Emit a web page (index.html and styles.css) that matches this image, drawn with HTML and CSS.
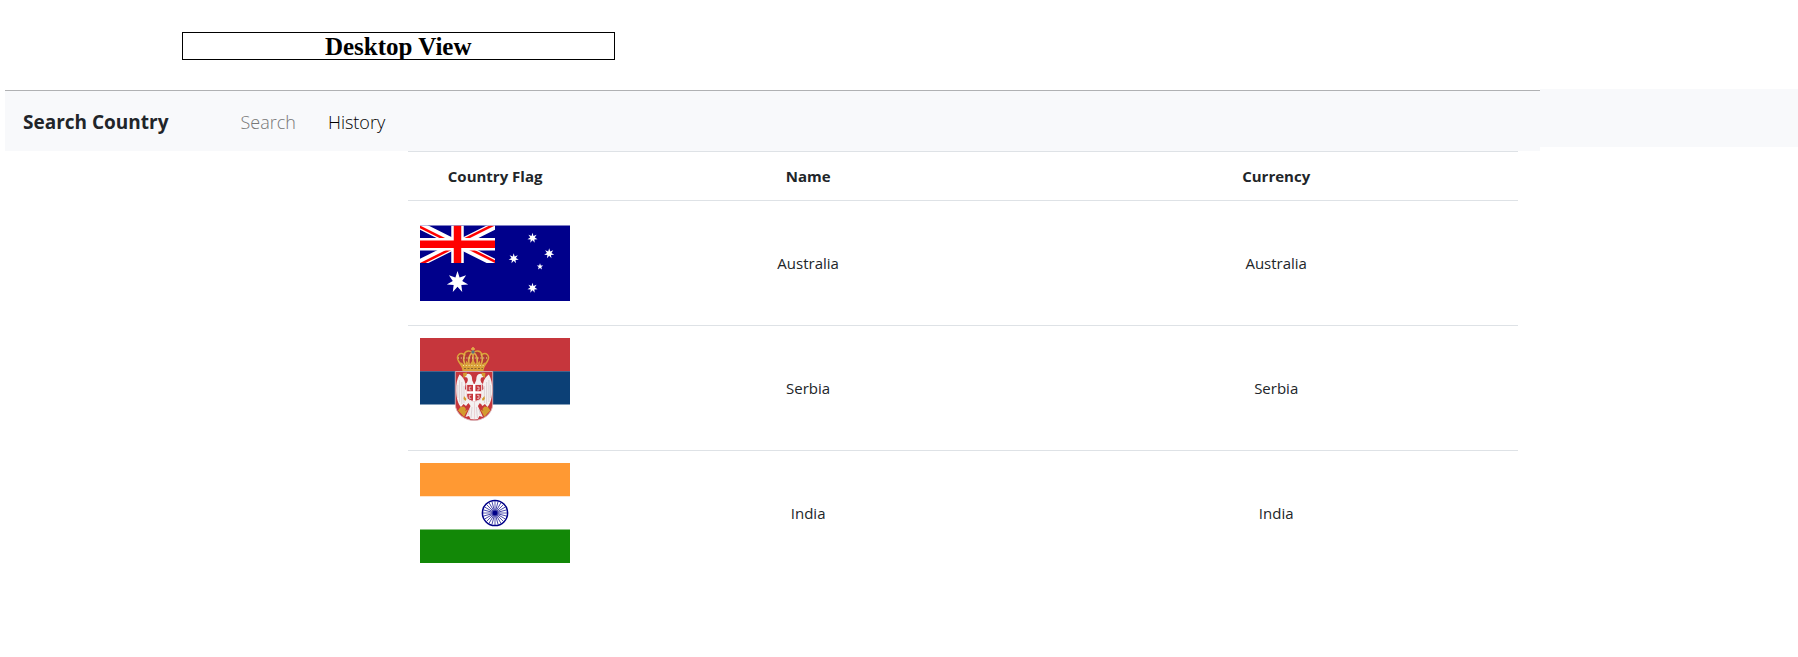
FILE: index.html
```html
<!DOCTYPE html>
<html lang="en">
<head>
<meta charset="utf-8">
<title>Search Country</title>
<link rel="stylesheet" href="styles.css">
</head>
<body>
<h1 class="view-title">Desktop View</h1>
<header class="header">
  <nav class="navbar">
    <span class="brand">Search Country</span>
    <a class="nav-link muted" href="#search">Search</a>
    <a class="nav-link" href="#history">History</a>
  </nav>
  <div class="header-rest"></div>
</header>
<main class="content">
  <table class="countries">
    <thead>
      <tr><th class="flag-col" scope="col">Country Flag</th><th class="name-col" scope="col">Name</th><th scope="col">Currency</th></tr>
    </thead>
    <tbody>
      <tr>
        <td>
          <svg class="flag" viewBox="0 0 150 100" role="img" aria-label="Flag of Australia">
            <defs>
              <path id="star7" d="M0-100 19-40 78-62 43-10 97 22 35 28 43 90 0 44-43 90-35 28-97 22-43-10-78-62-19-40Z"/>
              <clipPath id="canton"><path d="M0 0H60V30H0Z"/></clipPath>
              <clipPath id="saltire"><path d="M30 15H60V30ZM30 15V30H0ZM30 15H0V0ZM30 15V0H60Z"/></clipPath>
            </defs>
            <g transform="translate(0 12.5)">
              <path fill="#00008b" d="M0 0H150V75.500H0Z"/>
              <g transform="scale(1.25)" clip-path="url(#canton)">
                <path d="M0 0 60 30M60 0 0 30" stroke="#fff" stroke-width="6"/>
                <path d="M0 0 60 30M60 0 0 30" stroke="#f00" stroke-width="4" clip-path="url(#saltire)"/>
                <path d="M30 0V30M0 15H60" stroke="#fff" stroke-width="10"/>
                <path d="M30 0V30M0 15H60" stroke="#f00" stroke-width="6"/>
              </g>
              <g fill="#fff">
                <use href="#star7" transform="translate(37.5 56.5) scale(.11)"/>
                <use href="#star7" transform="translate(112.5 12.5) scale(.052)"/>
                <use href="#star7" transform="translate(93.7 33) scale(.052)"/>
                <use href="#star7" transform="translate(129.2 28) scale(.052)"/>
                <use href="#star7" transform="translate(112.5 62.5) scale(.052)"/>
                <path d="M120 37.7l.8 2.3h2.4l-1.9 1.5.7 2.4-2-1.4-2 1.4.7-2.4-1.9-1.5h2.4z"/>
              </g>
            </g>
          </svg>
        </td>
        <td>Australia</td><td>Australia</td>
      </tr>
      <tr>
        <td>
          <svg class="flag" viewBox="0 0 150 100" role="img" aria-label="Flag of Serbia">
            <path fill="#c6363c" d="M0 0H150V33.3H0Z"/>
            <path fill="#0c4076" d="M0 33.3H150V66.6H0Z"/>
            <!-- shield -->
            <path fill="#c6363c" stroke="#d9b3b8" stroke-width=".9" d="M35.300 33.500H72.700V66C72.700 76 63 82.500 54 82.500S35.300 76 35.300 66Z"/>
            <!-- eagle -->
            <g id="half-eagle">
              <path fill="#f4f1f1" d="M54.200 47 53 44C51.500 42 52.500 40 51.500 38 49.500 34.500 45.500 35.500 44.500 39L47 39.500C49 42 47 45 45.500 46 44.500 41 42 38 39.500 36.500 37 41 36 46 36.200 53 36.400 60 38 66 41 69L43.500 66 46 68 48.500 65 50.500 68C49 72 47 75 45.500 79L49 78 50.500 81 54.200 81.500Z"/>
              <path stroke="#c9b3b8" stroke-width=".5" fill="none" d="M39.500 42V64M41.800 44V66M44 48V65M49.500 71 48 77M52 69 51 80M37.800 47V60"/>
              <path fill="#d39b2f" d="M43 35 47 34.500 46.500 37.500 43.500 40ZM40.500 69 44 68.500 46 71 45 73 48 71.500 46 75 44 79 41.500 76 38 72.500ZM44 58 46.500 61 45.500 63 43.500 61Z"/>
              <path fill="#c6363c" d="M45.500 46 47 48V53L45 51ZM47 66 49.500 69 47.500 70Z"/>
            </g>
            <use href="#half-eagle" transform="translate(108.400 0) scale(-1 1)"/>
            <path fill="#c6363c" stroke="#f3e7e7" stroke-width="1" d="M46.700 46.500H61.700V58C61.700 65 46.700 65 46.700 58Z"/>
            <path stroke="#fff" stroke-width="2.400" d="M54.200 46V63M47 54.500H61.500"/>
            <path stroke="#f3dede" stroke-width=".8" fill="none" d="M51.300 49H49.300V52H51.300M57 49H59V52H57M51.300 57.300H49.300V60.300H51.300M57 57.300H59V60.300H57"/>
            <!-- crown -->
            <path fill="#b23a35" stroke="#dba33b" stroke-width="1.500" d="M43 30 38.500 23C35.500 17.500 40 14 44 16.500 46 12 51 12 53 15.500 55 12 60 12 62 16.500 66 14 70.500 17.500 67.500 23L63 30Z"/>
            <path fill="none" stroke="#e2b04a" stroke-width="1.600" d="M53 9V28M51 11H55M46 29C43 23 43 19 45 16M60 29C63 23 63 19 61 16M49.500 28C48 22 49 17 52 15M56.500 28C58 22 57 17 54 15"/>
            <path fill="#d9a23a" d="M40.500 24 45 27 46.500 22.500 49.500 27 53 21.500 56.500 27 59.500 22.500 61 27 65.500 24 63.500 33H42.500Z"/>
            <path stroke="#87612c" stroke-width="1.200" stroke-dasharray="2 1.500" d="M44 30.500H63"/>
            <path stroke="#f2dfa5" stroke-width="1" stroke-dasharray="1 1.800" d="M38 20H68M43 27.500H64"/>
            <circle cx="53" cy="14" r="1.700" fill="#5e7180"/>
          </svg>
        </td>
        <td>Serbia</td><td>Serbia</td>
      </tr>
      <tr>
        <td>
          <svg class="flag" viewBox="0 0 150 100" role="img" aria-label="Flag of India">
            <path fill="#f93" d="M0 0H150V33.300H0Z"/>
            <path fill="#128807" d="M0 66.600H150V100H0Z"/>
            <g transform="translate(75 50)" stroke="#000088" fill="none">
              <circle r="12.600" stroke-width="1.500"/>
              <g stroke-width=".65">
                <path id="cross" d="M0-12V12M-12 0H12"/>
                <use href="#cross" transform="rotate(15)"/>
                <use href="#cross" transform="rotate(30)"/>
                <use href="#cross" transform="rotate(45)"/>
                <use href="#cross" transform="rotate(60)"/>
                <use href="#cross" transform="rotate(75)"/>
              </g>
              <circle r="2.300" fill="#000088" stroke="none"/>
            </g>
          </svg>
        </td>
        <td>India</td><td>India</td>
      </tr>
    </tbody>
  </table>
</main>
</body>
</html>
```
FILE: styles.css
```css
* { box-sizing: border-box; }

body {
  margin: 0;
  background: #fff;
  color: #212529;
  font-family: "Segoe UI", "Open Sans", "Noto Sans", sans-serif;
  font-size: 15px;
  line-height: 24px;
}

.view-title {
  width: 24.1%;
  margin: 32px 0 29px 10.1%;
  padding-top: 1px;
  border: 1px solid #000;
  color: #000;
  font: bold 25px/25px "Liberation Serif", serif;
  text-align: center;
}

.header {
  display: flex;
  align-items: flex-start;
  padding-left: 5px;
}

.navbar {
  display: flex;
  align-items: center;
  width: 85.6%;
  height: 61px;
  margin-top: 1px;
  padding: 2px 18px 0;
  border-top: 1px solid #b0b1b3;
  background: #f8f9fb;
  font-size: 18px;
}

.brand {
  margin-right: 72px;
  font-size: 19px;
  font-weight: bold;
}

.nav-link {
  margin-right: 32px;
  color: #000;
  font-weight: 300;
  text-decoration: none;
}

.muted { color: #777; }

.header-rest {
  flex: 1;
  height: 58px;
  background: #f8f9fb;
}

.content {
  width: 61.74%;
  margin-left: 22.7%;
}

.countries {
  width: 100%;
  border-collapse: collapse;
  table-layout: fixed;
  text-align: center;
}

.countries th,
.countries td {
  padding: 12px;
  border-top: 1px solid #dee2e6;
  vertical-align: middle;
}

.flag-col { width: 174px; }
.name-col { width: 452px; }

.flag {
  display: block;
  width: 150px;
  height: 100px;
}
```
